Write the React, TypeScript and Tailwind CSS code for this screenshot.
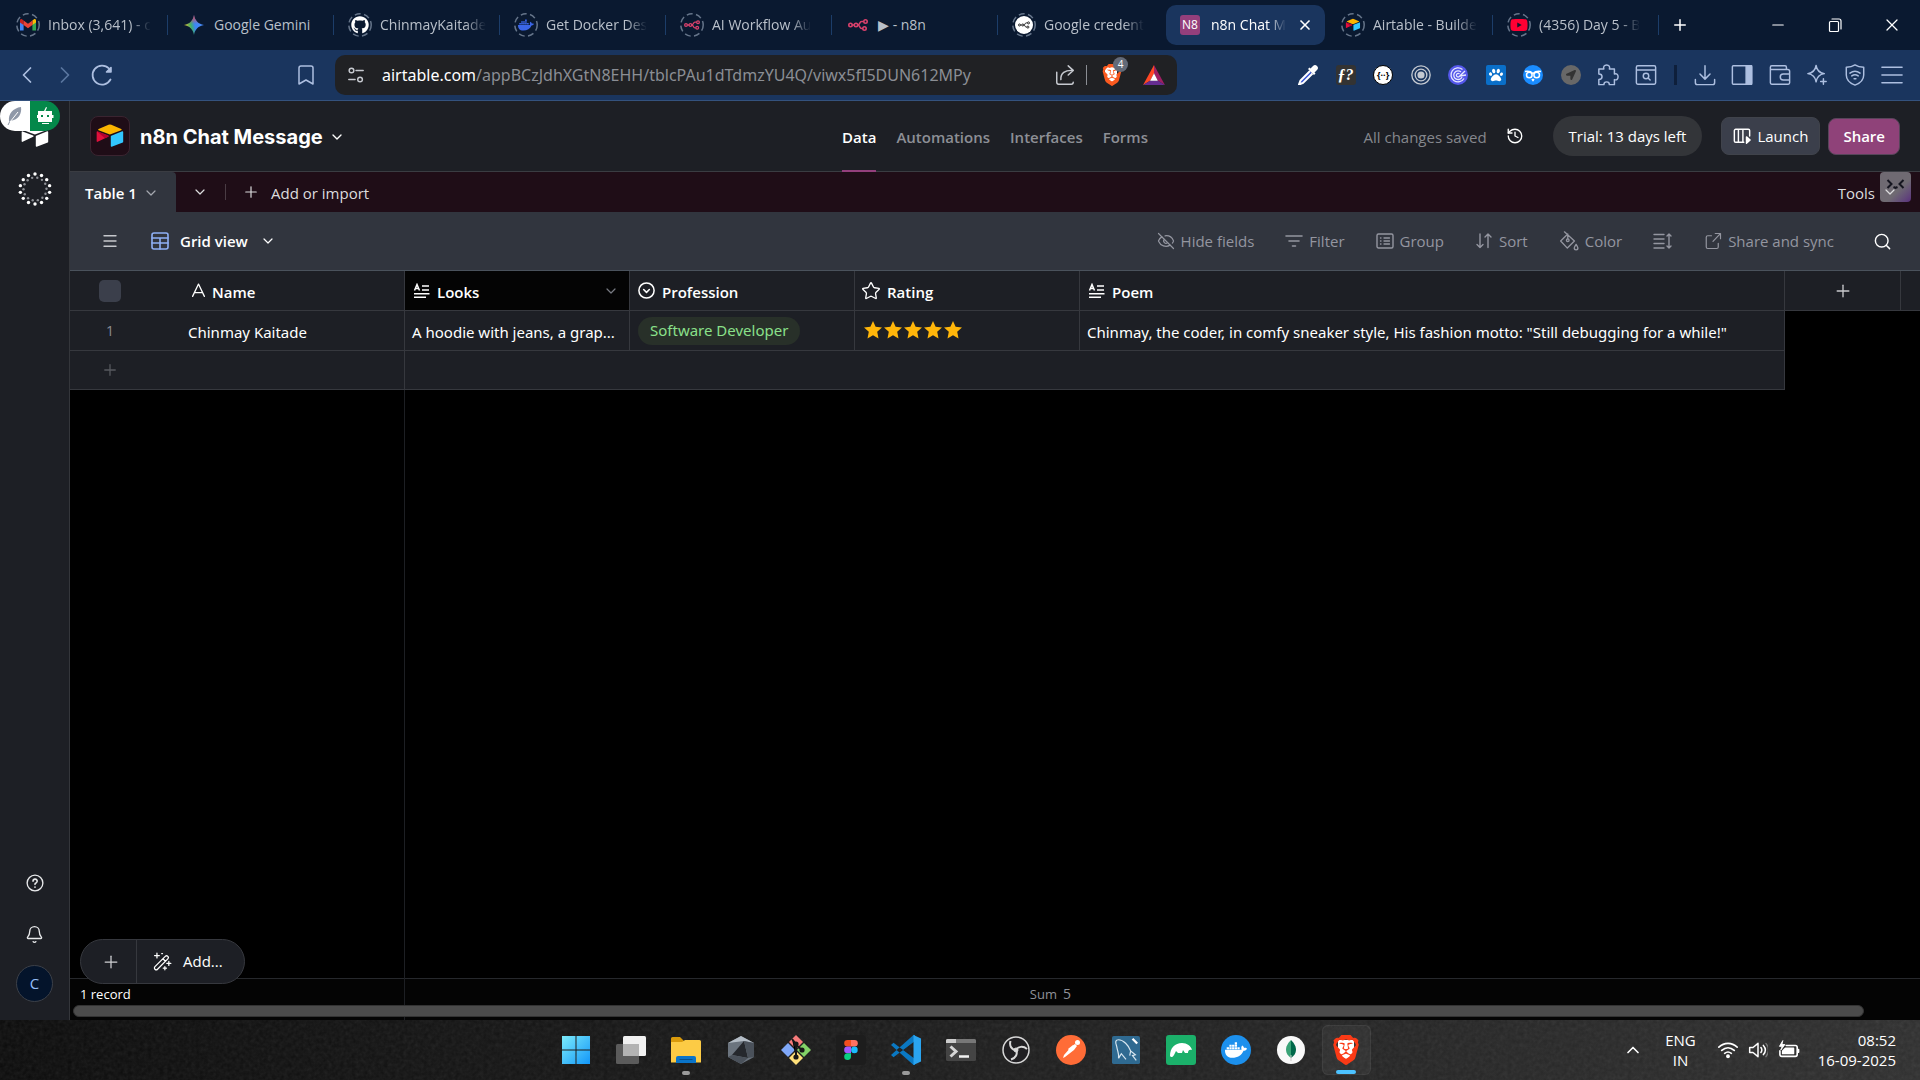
import React from "react";
import {
  Bell, Bookmark, ChevronDown, ChevronLeft, ChevronRight, ChevronUp, EyeOff, History, Menu,
  Minus, Plus, Search, Star, X,
} from "lucide-react";
import { FaDocker, FaGithub, FaYoutube, FaPaw, FaLocationArrow } from "react-icons/fa";
import { SiBrave } from "react-icons/si";

type Kids = { children?: React.ReactNode; className?: string };

function Svg({ children, className = "size-5", box = "0 0 24 24" }: Kids & { box?: string }) {
  return (
    <svg viewBox={box} className={className} fill="none" stroke="currentColor" strokeWidth="1.6" strokeLinecap="round" strokeLinejoin="round" aria-hidden="true">
      {children}
    </svg>
  );
}

function AirtableLogo({ className, mono = false }: { className?: string; mono?: boolean }) {
  return (
    <svg viewBox="0 0 200 170" className={className} aria-hidden="true">
      <path fill={mono ? "#fff" : "#fcb400"} d="M90.039 12.368 24.079 39.66c-3.667 1.519-3.63 6.729.062 8.192l66.235 26.266a24.58 24.58 0 0 0 18.12 0l66.236-26.266c3.69-1.463 3.729-6.673.06-8.191l-65.958-27.293a24.58 24.58 0 0 0-18.795 0" />
      <path fill={mono ? "#fff" : "#32c6ff"} d="M105.312 88.46v65.617c0 3.12 3.147 5.258 6.048 4.108l73.806-28.648a4.42 4.42 0 0 0 2.79-4.108V59.813c0-3.121-3.147-5.258-6.048-4.108l-73.806 28.648a4.42 4.42 0 0 0-2.79 4.108" />
      <path fill={mono ? "#fff" : "#e0103c"} d="M88.078 91.846 17.712 125.652c-2.93 1.414-6.672-.722-6.672-3.978V60.088c0-3 3.5-5.3 6.554-4.11L87.71 83.76c3.564 1.414 3.844 6.408.368 8.086" />
      {!mono && <path fill="#b3002f" d="m88.078 91.846-21.904 10.576L14 57.3c1-1 2.6-1.6 4-1.2L87.71 83.76c3.564 1.414 3.844 6.408.368 8.086" />}
    </svg>
  );
}

function N8nMark({ className, color = "#d9416c" }: { className?: string; color?: string }) {
  return (
    <svg viewBox="0 0 40 24" className={className} fill="none" stroke={color} strokeWidth="3.2" aria-hidden="true">
      <circle cx="5" cy="12" r="3.4" />
      <circle cx="16" cy="12" r="3.4" />
      <circle cx="35" cy="5" r="3.4" />
      <circle cx="33" cy="19" r="3.4" />
      <path d="M8.4 12h4.2M19.4 12c5 0 3-7 8-7h4M19.4 12c5 0 3 7 8 7h2" />
    </svg>
  );
}

function Ring({ children }: Kids) {
  return (
    <span className="relative grid size-6 place-items-center">
      <svg viewBox="0 0 24 24" className="absolute inset-0 size-6" fill="none" stroke="#66758a" strokeWidth="1.5" strokeDasharray="6 3.42" aria-hidden="true">
        <circle cx="12" cy="12" r="11.2" />
      </svg>
      {children}
    </span>
  );
}

const gmail = (
  <svg viewBox="0 0 16 12" className="h-3 w-4" aria-hidden="true">
    <path fill="#4285f4" d="M0 2v9.500h3.600V5z" />
    <path fill="#34a853" d="M16 2v9.500h-3.600V5z" />
    <path fill="#fbbc04" d="M12.400 1.500 14 .3c.8-.5 2 0 2 1.300v1.800L12.400 6z" />
    <path fill="#c5221f" d="M3.600 1.500 2 .3C1.200-.2 0 .3 0 1.600v1.800L3.600 6z" />
    <path fill="#ea4335" d="M3.600 1.500 8 4.800l4.400-3.300V6L8 9.300 3.600 6z" />
  </svg>
);

const gemini = (
  <svg viewBox="0 0 20 20" className="size-5" aria-hidden="true">
    <defs>
      <linearGradient id="gem" x1="0" y1="0.6" x2="1" y2="0.4">
        <stop offset="0" stopColor="#f6c026" />
        <stop offset="0.35" stopColor="#3fae6a" />
        <stop offset="0.55" stopColor="#3b86f5" />
        <stop offset="1" stopColor="#4b8cf8" />
      </linearGradient>
      <linearGradient id="gem2" x1="0.5" y1="0" x2="0.5" y2="1">
        <stop offset="0" stopColor="#f04438" />
        <stop offset="0.45" stopColor="#f04438" stopOpacity="0" />
      </linearGradient>
    </defs>
    <path fill="url(#gem)" d="M10 0c.8 5.500 4.500 9.200 10 10-5.500.8-9.200 4.500-10 10C9.200 14.500 5.500 10.800 0 10 5.500 9.200 9.200 5.500 10 0" />
    <path fill="url(#gem2)" d="M10 0c.8 5.500 4.500 9.200 10 10-5.500.8-9.200 4.500-10 10C9.200 14.500 5.500 10.800 0 10 5.500 9.200 9.200 5.500 10 0" />
  </svg>
);

const tabs = [
  { title: "Inbox (3,641) - c", fade: true, icon: <Ring>{gmail}</Ring> },
  { title: "Google Gemini", icon: gemini },
  { title: "ChinmayKaitade", fade: true, icon: <Ring><FaGithub className="size-[18px] text-white" /></Ring> },
  { title: "Get Docker Des", fade: true, icon: <Ring><FaDocker className="size-4 text-[#3b66e8]" /></Ring> },
  { title: "AI Workflow Au", fade: true, icon: <Ring><N8nMark className="h-3 w-4" /></Ring> },
  { title: "▶ - n8n", icon: <N8nMark className="h-4 w-5" /> },
  { title: "Google credent", fade: true, last: true, icon: <Ring><span className="grid size-[18px] place-items-center rounded-full bg-white"><N8nMark className="h-2 w-3" color="#222" /></span></Ring> },
  { title: "n8n Chat M", active: true, icon: <span className="grid size-5 place-items-center rounded-[3px] bg-[#943f7c] text-xs text-white">N8</span> },
  { title: "Airtable - Builde", fade: true, icon: <Ring><AirtableLogo className="w-4" /></Ring> },
  { title: "(4356) Day 5 - B", fade: true, icon: <Ring><FaYoutube className="size-[18px] text-[#ff0033]" /></Ring> },
];

function TabStrip() {
  return (
    <div className="flex h-[50px] shrink-0 items-center bg-[#0a1930] pl-[2px] text-sm text-[#b9c0ca]">
      {tabs.map((t) =>
        t.active ? (
          <div key={t.title} className="mx-[2px] flex h-10 w-[159px] items-center rounded-[10px] bg-[#1a355e] pl-3 text-white">
            <span className="grid w-6 place-items-center">{t.icon}</span>
            <span className="ml-[9px] whitespace-nowrap [mask-image:linear-gradient(to_right,black_75%,transparent)]">{t.title}</span>
            <button aria-label="Close tab" className="ml-auto pr-3"><X className="size-4" strokeWidth={2.5} /></button>
          </div>
        ) : (
          <div key={t.title} className="flex h-10 w-[166px] items-center pl-3">
            <span className="grid w-7 place-items-center">{t.icon}</span>
            <span className={t.fade ? "ml-[6px] whitespace-nowrap [mask-image:linear-gradient(to_right,black_80%,transparent)]" : "ml-[6px] whitespace-nowrap"}>{t.title}</span>
            <span className={t.last ? "ml-auto h-5 w-px" : "ml-auto h-5 w-px bg-[#1c3d69]"} />
          </div>
        )
      )}
      <button aria-label="New tab" className="ml-3 text-white"><Plus className="size-[18px]" strokeWidth={2} /></button>
      <div className="ml-auto flex text-white">
        <button aria-label="Minimize" className="grid w-[57px] place-items-center"><Minus className="size-[18px]" strokeWidth={1.5} /></button>
        <button aria-label="Restore" className="grid w-[57px] place-items-center">
          <Svg className="size-4" box="0 0 16 16"><path d="M3.500 4.500h7a1 1 0 0 1 1 1v8a1 1 0 0 1-1 1h-7a1 1 0 0 1-1-1v-8a1 1 0 0 1 1-1M5 2h7a2 2 0 0 1 2 2v8" strokeWidth="1.2" /></Svg>
        </button>
        <button aria-label="Close" className="grid w-[57px] place-items-center"><X className="size-5" strokeWidth={1.5} /></button>
      </div>
    </div>
  );
}

const extensions: [string, React.ReactNode][] = [
  ["Color picker", <svg key="a" viewBox="0 0 20 20" className="size-5"><path d="m12 6-9.500 9.500-1.500 4 4-1.500L14.500 8.500" fill="#3a56d4" stroke="#fff" strokeWidth="2" /><path d="m10 4 6 6 1.500-1.500-1-1L19 5a2.500 2.500 0 0 0-4-4l-2.500 2.500-1-1z" fill="#fff" /></svg>],
  ["Font finder", <span key="b" className="grid size-5 place-items-center rounded-[3px] bg-[#333] font-['Liberation_Serif'] text-base leading-none font-bold text-white italic">ƒ?</span>],
  ["JSON viewer", <span key="c" className="grid size-5 place-items-center rounded-full border border-black bg-white text-[9px] font-bold text-black">{"{··}"}</span>],
  ["Target", <Svg key="d" className="size-5 text-[#c4c9d1]"><circle cx="12" cy="12" r="11" /><circle cx="12" cy="12" r="7" /><circle cx="12" cy="12" r="3.5" fill="currentColor" /></Svg>],
  ["Radar", <svg key="e" viewBox="0 0 20 20" className="size-5" fill="none" stroke="#e6e8ff" strokeWidth="1.3"><circle cx="10" cy="10" r="10" fill="#5457ea" stroke="none" /><path d="M14.500 4.500a7 7 0 1 0 1.500 9M13 7a4.300 4.300 0 1 0 1 5M11.500 9a1.800 1.800 0 1 0 .3 2L17 6M12 11l6-1" /></svg>],
  ["Paw", <span key="f" className="grid size-5 place-items-center rounded-[2px] bg-[#0a6fc9]"><FaPaw className="size-[14px] text-white" /></span>],
  ["Owl", <svg key="g" viewBox="0 0 20 20" className="size-5" fill="none" stroke="#fff" strokeWidth="1.5"><circle cx="10" cy="10" r="10" fill="#1a8cff" stroke="none" /><circle cx="6.3" cy="10" r="2.8" /><circle cx="13.7" cy="10" r="2.8" /><path d="M2 6.500c3-.5 6 0 8 2 2-2 5-2.500 8-2M9 14l1 1.500 1-1.500" /></svg>],
  ["Location", <span key="h" className="grid size-5 place-items-center rounded-full bg-[#686868]"><FaLocationArrow className="size-[10px] text-[#333]" /></span>],
  ["Extensions", <Svg key="i" className="size-[22px]"><path d="M2 5.500h5.500c-1-2.500.500-4.500 3-4.500s4 2 3 4.500H19V11c2.500-1 4 .5 4 3s-1.500 4-4 3v5.500h-5.500c0-2-1-3-3-3s-3 1-3 3H2V17c2 0 3.500-1 3.500-3S4 11 2 11z" /></Svg>],
  ["Find on page", <Svg key="j" className="size-[22px]"><rect x="1.5" y="2" width="21" height="20" rx="1.5" /><path d="M2 6.500h20" /><circle cx="12" cy="13" r="3" /><path d="m14.500 15.500 2 2" /></Svg>],
];

const browserTools: [string, React.ReactNode][] = [
  ["Downloads", <Svg key="a" className="size-[22px]"><path d="M12 2v14M6.500 11l5.500 5.500L17.500 11M1.500 17v3.500a2 2 0 0 0 2 2h17a2 2 0 0 0 2-2V17" /></Svg>],
  ["Sidebar", <Svg key="b" className="size-[22px]"><rect x="1.5" y="2" width="21" height="20" rx="1" /><path d="M16.500 2h6v20h-6z" fill="currentColor" /></Svg>],
  ["Wallet", <Svg key="c" className="size-[22px]"><path d="M19 6V3.500a1.500 1.500 0 0 0-1.500-1.500H3a1.500 1.500 0 0 0-1.500 1.500v17A1.500 1.500 0 0 0 3 22h18a1.500 1.500 0 0 0 1.500-1.500V8A2 2 0 0 0 20.500 6H2M22 11h-6.500a3.200 3.200 0 0 0 0 6.400H22" /></Svg>],
  ["Leo", <Svg key="d" className="size-[22px]"><path d="M11 1.500c.8 5.500 3.500 8.200 9 9-5.500.8-8.200 3.500-9 9-.8-5.500-3.500-8.200-9-9 5.500-.8 8.200-3.500 9-9M19 16v6M16 19h6" /></Svg>],
  ["VPN", <Svg key="e" className="size-[22px]"><path d="M12 1c3 2 6 2.500 9.500 2.500V12c0 5-4 9-9.500 11C6.500 21 2.500 17 2.500 12V3.500C6 3.500 9 3 12 1M6.500 10c3.500-2.800 7.500-2.800 11 0M8.500 13c2.500-1.800 4.500-1.800 7 0M11 16h2" /></Svg>],
  ["Menu", <Svg key="f" className="size-[22px]"><path d="M1 3.500h22M1 12h22M1 20.500h22" /></Svg>],
];

function BrowserBar() {
  return (
    <div className="flex h-[51px] shrink-0 items-center border-b border-[#34527e] bg-[#1a355e] text-[#adbfe0]">
      <div className="flex w-[335px] shrink-0 items-center pl-[13px]">
        <button aria-label="Back"><ChevronLeft className="size-7" strokeWidth={1.5} /></button>
        <button aria-label="Forward" className="ml-[10px] text-[#5a769f]"><ChevronRight className="size-7" strokeWidth={1.5} /></button>
        <button aria-label="Reload" className="ml-[11px]">
          <Svg className="size-6"><path d="M20.500 16.500A9.500 9.500 0 1 1 19 5.500" strokeWidth="1.8" /><path d="M16.500 9H21V4.500z" fill="currentColor" /></Svg>
        </button>
        <button aria-label="Bookmark" className="mr-[17px] ml-auto"><Bookmark className="size-6" strokeWidth={1.5} /></button>
      </div>
      <div className="flex h-10 max-w-[842px] min-w-0 flex-1 items-center rounded-[10px] bg-[#202124] px-3 text-[#c7cad0]">
        <Svg className="size-[18px] shrink-0" box="0 0 20 20"><circle cx="5" cy="5" r="2.6" /><path d="M10 5h8M2 15h7" /><circle cx="14.5" cy="15" r="2.6" /></Svg>
        <p className="ml-[17px] min-w-0 flex-1 truncate font-['Noto_Sans'] text-base text-[#8b8e94]"><span className="text-white">airtable.com</span>/appBCzJdhXGtN8EHH/tblcPAu1dTdmzYU4Q/viwx5fI5DUN612MPy</p>
        <button aria-label="Share page"><Svg className="size-[22px]"><path d="M3 9v11a2 2 0 0 0 2 2h14a2 2 0 0 0 2-2M7.500 17C7 10 12 6.500 20.500 7M15.500 2l5.500 5-5.500 5" /></Svg></button>
        <span className="mx-[10px] h-5 w-px bg-[#8b8e94]" />
        <button aria-label="Brave Shields" className="relative ml-1">
          <span className="relative grid h-6 w-5 place-items-center"><span className="absolute h-4 w-3 rounded-b-md bg-white" /><SiBrave className="relative size-[22px] text-[#fb5a1f]" /></span>
          <span className="absolute -top-[6px] left-3 grid size-[15px] place-items-center rounded-full bg-[#636a78] text-[10px] text-white">4</span>
        </button>
        <button aria-label="Brave Rewards" className="ml-[22px]">
          <svg viewBox="0 0 24 22" className="w-[22px]"><path fill="#ff4724" d="M12 0 0 22l8-5 4-8z" /><path fill="#9e1f63" d="m12 0 12 22-8-5-4-8z" /><path fill="#662d91" d="M0 22h24l-8-5H8z" /><path fill="#fff" d="m12 9 4.200 8.200H7.800z" /></svg>
        </button>
      </div>
      <div className="mr-[18px] ml-auto flex items-center pl-4">
        <div className="flex w-[358px] items-center justify-between">
          {extensions.map(([l, i]) => <button key={l} aria-label={l} className="flex w-5 justify-center"><span className="shrink-0">{i}</span></button>)}
        </div>
        <span className="mx-[18px] h-5 w-[3px] bg-[#0e1f3b]" />
        <div className="flex w-[207px] items-center justify-between">
          {browserTools.map(([l, i]) => <button key={l} aria-label={l} className="flex w-5 justify-center"><span className="shrink-0">{i}</span></button>)}
        </div>
      </div>
    </div>
  );
}

function Rail() {
  const dots = Array.from({ length: 14 }, (_, i) => (i / 14) * Math.PI * 2 - Math.PI / 2);
  return (
    <aside className="relative flex w-[70px] shrink-0 flex-col items-center border-r border-[#34363b] bg-[#1d1f25] pt-[22px] text-[#e8e9eb]">
      <div className="absolute top-0 left-0 flex h-[30px] w-[60px] overflow-hidden rounded-full">
        <button aria-label="Writer" className="grid flex-1 place-items-center bg-white">
          <svg viewBox="0 0 20 20" className="size-[20px]"><path d="m3 19 5-10" stroke="#8f98a8" /><path d="M4 15C3 8 8 2 16 1c1 6-2 13-11 14" fill="#8f98a8" /><path d="M5 16 13 6" stroke="#fff" /></svg>
        </button>
        <button aria-label="Assistant" className="grid flex-1 place-items-center bg-[#04884a]">
          <svg viewBox="0 0 20 20" className="size-[20px]" fill="#fff"><path d="m9 5 2-4 1 .6L10.500 5H17v11h-3v2H7v-2H3V5zM2 9v3h1V9zM17 9v3h1.500V9z" /><path fill="#04884a" d="M6 9h2v2H6zM12 9h2v2h-2zM7 16h7v1H7z" /></svg>
        </button>
      </div>
      <AirtableLogo mono className="w-[30px]" />
      <svg viewBox="0 0 36 36" className="mt-[22px] size-9" aria-hidden="true">
        {dots.map((a) => (
          <g key={a}>
            <circle cx={18 + 15 * Math.cos(a)} cy={18 + 15 * Math.sin(a)} r="1.7" fill="#fff" />
            <circle cx={18 + 11.5 * Math.cos(a + 0.2)} cy={18 + 11.5 * Math.sin(a + 0.2)} r="1.2" fill="#8e9096" />
          </g>
        ))}
      </svg>
      <button aria-label="Help" className="mt-auto">
        <Svg className="size-[18px]"><circle cx="12" cy="12" r="10.5" strokeWidth="1.8" /><path d="M9.300 9.500a2.800 2.800 0 1 1 4 2.600c-.9.400-1.300.8-1.300 1.700M12 17.300v.2" strokeWidth="2.2" /></Svg>
      </button>
      <button aria-label="Notifications" className="mt-[33px]"><Bell className="size-[19px]" strokeWidth={1.7} /></button>
      <button aria-label="Account" className="mt-[21px] mb-[18px] grid size-[37px] place-items-center rounded-full border border-[#3c4048] bg-[#04142b] text-[15px] text-[#93bdf7]">C</button>
    </aside>
  );
}

function AppHeader() {
  return (
    <header className="grid h-[71px] shrink-0 grid-cols-[1fr_auto_1fr] items-center border-b border-[#3a3c42] bg-[#1d1f25] pr-5 pl-5">
      <div className="flex items-center">
        <span className="grid size-10 place-items-center rounded-lg border border-[#3a2430] bg-[#1f0d17]"><AirtableLogo className="w-[30px]" /></span>
        <button className="ml-[10px] flex items-center gap-[6px] pt-px font-['Inter'] text-xl font-bold text-white">n8n Chat Message<ChevronDown className="size-4" strokeWidth={2} /></button>
      </div>
      <nav className="flex h-full gap-5 text-[15px] font-semibold text-[#8d8f96]">
        <a href="#data" className="-mb-px flex items-center border-b-2 border-[#943f7c] pt-1 text-white">Data</a>
        <a href="#automations" className="flex items-center pt-[2px]">Automations</a>
        <a href="#interfaces" className="flex items-center pt-[2px]">Interfaces</a>
        <a href="#forms" className="flex items-center pt-[2px]">Forms</a>
      </nav>
      <div className="flex items-center justify-end text-[15px] text-white">
        <span className="pt-[2px] text-[#85878d]">All changes saved</span>
        <button aria-label="History" className="ml-[19px]"><History className="size-[18px]" strokeWidth={1.8} /></button>
        <button className="ml-[29px] h-10 rounded-full bg-[#333539] px-4">Trial: 13 days left</button>
        <button className="ml-[19px] flex h-[38px] items-center gap-[6px] rounded-lg border border-[#40434b] bg-[#3b3f4b] px-[11px]">
          <Svg className="size-[18px]" box="0 0 20 20"><path d="M12 17H3a1.500 1.500 0 0 1-1.500-1.500V4A1.500 1.500 0 0 1 3 2.500h14A1.500 1.500 0 0 1 18.500 4v6M6 3v13.500M11 3v13.500" /><path d="m15 11 4 3.500-4 3.500z" fill="currentColor" /></Svg>
          Launch
        </button>
        <button className="ml-2 h-[37px] rounded-lg border border-[#57455a] bg-[#8f4279] px-[14px] font-semibold">Share</button>
      </div>
    </header>
  );
}

function TableTabs() {
  return (
    <div className="flex h-10 shrink-0 items-center bg-[#1f0d17] text-[15px] text-[#dcdcde]">
      <button className="flex h-full w-[106px] items-center gap-[6px] rounded-tr bg-[#31353e] pt-[2px] pl-[15px] font-semibold text-white">Table 1<ChevronDown className="size-4 text-[#a5a8af]" strokeWidth={1.8} /></button>
      <button aria-label="All tables" className="ml-4"><ChevronDown className="size-4" strokeWidth={1.8} /></button>
      <span className="ml-[17px] h-4 w-px bg-[#4a3c44]" />
      <button className="ml-4 flex items-center gap-[11px]"><Plus className="size-[18px]" strokeWidth={1.6} /><span className="pt-[2px]">Add or import</span></button>
      <button className="relative mr-[22px] ml-auto flex items-center gap-[7px]">
        <span className="pt-[2px]">Tools</span>
        <ChevronDown className="relative z-10 size-4" strokeWidth={1.8} />
        <span className="absolute -top-2 -right-[13px] h-[30px] w-[31px] rounded bg-linear-to-br from-[#6f6a72] from-60% to-[#5a2f7c]">
          <svg viewBox="0 0 30 30" className="size-full" fill="none" stroke="#15151f" strokeWidth="2"><path d="m7 8 4 4-4 4M23 8l-4 4 4 4M13 15l2 1 2-1" /></svg>
        </span>
      </button>
    </div>
  );
}

function ToolBtn({ icon, label }: { icon: React.ReactNode; label: string }) {
  return <button className="flex items-center gap-[6px]">{icon}{label}</button>;
}

function ViewBar() {
  return (
    <div className="flex h-[59px] shrink-0 items-center border-b border-[#4a525c] bg-[#31353e] text-[15px] text-[#9496a0]">
      <button aria-label="Views" className="ml-[31px] text-[#c6c8cc]"><Menu className="size-[18px]" strokeWidth={1.8} /></button>
      <button className="ml-8 flex items-center font-semibold text-white">
        <Svg className="size-[18px] text-[#8fb0f5]" box="0 0 18 18"><rect x="1" y="1" width="16" height="16" rx="2" /><path d="M1 6h16M1 11h16M9 6v11" /></Svg>
        <span className="ml-[11px]">Grid view</span>
        <ChevronDown className="ml-3 size-4" strokeWidth={1.8} />
      </button>
      <div className="mr-7 ml-auto flex items-center">
        <ToolBtn label="Hide fields" icon={<EyeOff className="size-[18px]" strokeWidth={1.6} />} />
        <span className="w-[31px]" />
        <ToolBtn label="Filter" icon={<Svg className="size-[18px]" box="0 0 18 18"><path d="M1 4h16M4 9h10M7.500 14h3" /></Svg>} />
        <span className="w-[31px]" />
        <ToolBtn label="Group" icon={<Svg className="size-[18px]" box="0 0 18 18"><rect x="1" y="2" width="16" height="14" rx="1.5" strokeWidth="1.4" /><path d="M4.500 6h.5M4.500 9h.5M4.500 12h.5M8 6h5.500M8 9h5.500M8 12h5.500" strokeWidth="1.3" /></Svg>} />
        <span className="w-[31px]" />
        <ToolBtn label="Sort" icon={<Svg className="size-[18px]" box="0 0 18 18"><path d="M5 2v13.500M2 12.500l3 3 3-3M13 15.500V2M10 5l3-3 3 3" strokeWidth="1.4" /></Svg>} />
        <span className="w-[31px]" />
        <ToolBtn label="Color" icon={<Svg className="size-5"><path d="M9 5 2 12l8 8.500 8.500-8.500L6.500 1M10.500 3.500v6" /><circle cx="10.5" cy="11" r="1.6" /><path d="M20.500 16c-1.500 2.300-2.200 3.400-2.200 4.400a2.200 2.200 0 0 0 4.400 0c0-1-.7-2.100-2.200-4.400" /></Svg>} />
        <button aria-label="Row height" className="ml-[31px]"><Svg className="size-5" box="0 0 20 20"><path d="M1 3.500h10M1 8h10M1 12.500h10M1 17h10M16 3v14M14 5l2-2 2 2M14 15l2 2 2-2" strokeWidth="1.4" /></Svg></button>
        <span className="w-[31px]" />
        <ToolBtn label="Share and sync" icon={<Svg className="size-[18px]"><path d="M10 5H5a2 2 0 0 0-2 2v13a2 2 0 0 0 2 2h12a2 2 0 0 0 2-2v-5M12 12.500 21.500 2.500M15 2h7v7" /></Svg>} />
        <button aria-label="Search" className="ml-[39px] text-white"><Search className="size-[19px]" strokeWidth={1.8} /></button>
      </div>
    </div>
  );
}

const textField = (
  <svg viewBox="0 0 18 16" className="h-4 w-[18px]" fill="none" stroke="currentColor" strokeWidth="1.5" aria-hidden="true">
    <path d="M1.500 7.500 4 1.500l2.500 6M2.500 5.500h3M9 3h7M9 7h7M1 10.700h15.500M1 14.200h12" />
  </svg>
);

function Grid() {
  const line = "border-[#36383e]";
  return (
    <table className="relative z-10 w-full table-fixed border-separate border-spacing-0 text-left text-[15px] text-white">
      <colgroup>
        <col className="w-[335px]" /><col className="w-[225px]" /><col className="w-[225px]" /><col className="w-[225px]" /><col className="w-[705px]" /><col className="w-[116px]" /><col />
      </colgroup>
      <thead>
        <tr className="h-10 bg-[#1d1f25] *:border-[#36383e] *:border-b *:p-0 *:font-semibold">
          <th className="border-r">
            <div className="flex items-center">
              <input type="checkbox" aria-label="Select all" className="ml-[29px] size-[22px] appearance-none rounded-[5px] bg-[#3b3f4b]" />
              <Svg className="ml-[70px] size-[15px]" box="0 0 14 14"><path d="M1.500 12.500 7 1l5.500 11.500M3.500 9h7" strokeWidth="1.2" /></Svg>
              <span className="ml-[6px] pt-[3px]">Name</span>
            </div>
          </th>
          <th className="border-r bg-[#040404]">
            <div className="flex items-center gap-[6px] pr-[10px] pl-2">{textField}<span className="pt-[3px]">Looks</span><ChevronDown className="ml-auto size-4 text-[#777a82]" strokeWidth={1.8} /></div>
          </th>
          <th className="border-r">
            <div className="flex items-center gap-[6px] pl-[7px]"><Svg className="size-[19px]" box="0 0 20 20"><circle cx="10" cy="10" r="8" /><path d="m7 9 3 3 3-3" /></Svg><span className="pt-[3px]">Profession</span></div>
          </th>
          <th className="border-r">
            <div className="flex items-center gap-[6px] pl-[6px]"><Star className="size-5" strokeWidth={1.6} /><span className="pt-[3px]">Rating</span></div>
          </th>
          <th className="border-r">
            <div className="flex items-center gap-[6px] pl-2">{textField}<span className="pt-[3px]">Poem</span></div>
          </th>
          <th className="border-r"><button aria-label="Add field" className="grid w-full place-items-center"><Plus className="size-5 text-[#c9cacd]" strokeWidth={1.6} /></button></th>
          <th />
        </tr>
      </thead>
      <tbody>
        <tr className="h-10 *:border-[#36383e] *:p-0 [&>td:nth-child(-n+5)]:border-r [&>td:nth-child(-n+5)]:border-b [&>td:nth-child(-n+5)]:bg-[#1d1f25]">
          <td><div className="flex items-center"><span className="w-[80px] text-center text-sm text-[#8a8d95]">1</span><span className="ml-[38px] pt-[3px] font-['Noto_Sans']">Chinmay Kaitade</span></div></td>
          <td><div className="px-[7px] pt-[3px] font-['Noto_Sans'] whitespace-nowrap">A hoodie with jeans, a grap...</div></td>
          <td><span className="ml-2 inline-flex h-7 items-center rounded-full bg-[#283029] px-3 font-['Noto_Sans'] text-[#8ae08a]">Software Developer</span></td>
          <td>
            <div className="flex pb-px pl-2">
              {[1, 2, 3, 4, 5].map((n) => (
                <svg key={n} viewBox="0 0 20 20" className="size-5" fill="#ffb60a" aria-hidden="true"><path d="M10 1 12.600 6.800 19 7.500 14.200 11.800 15.500 18.500 10 15.200 4.500 18.500 5.800 11.800 1 7.500 7.400 6.800z" /></svg>
              ))}
            </div>
          </td>
          <td><div className="truncate px-[7px] pt-[3px] font-['Noto_Sans']">Chinmay, the coder, in comfy sneaker style, His fashion motto: "Still debugging for a while!"</div></td>
          <td /><td />
        </tr>
        <tr className="h-[39px]">
          <td className={"border-r border-b bg-[#1d1f25] p-0 " + line}><button aria-label="Add record" className="ml-[31px] block text-[#57595f]"><Plus className="size-[18px]" strokeWidth={1.7} /></button></td>
          <td colSpan={4} className={"border-r border-b bg-[#1d1f25] p-0 " + line} />
          <td /><td />
        </tr>
      </tbody>
    </table>
  );
}

function GridPane() {
  return (
    <div className="relative flex min-h-0 flex-1 flex-col bg-black">
      <div className="absolute inset-y-0 left-0 w-[335px] border-r border-[#1d1f23]" />
      <Grid />
      <div className="absolute bottom-9 left-[10px] z-20 flex h-[45px] items-center rounded-full border border-[#36383e] bg-[#1d1f25] text-[15px] text-white">
        <button aria-label="Add record" className="grid h-full w-14 place-items-center border-r border-[#36383e] pl-1"><Plus className="size-5 text-[#d0d1d4]" strokeWidth={1.5} /></button>
        <button className="flex items-center gap-[11px] pr-[21px] pl-4">
          <Svg className="size-[19px]"><path d="m2.500 18.500 13-13a2.200 2.200 0 0 1 3.200 3.200l-13 13a2.200 2.200 0 0 1-3.200-3.200M12.500 8.500l3.200 3.200M5 1.500v6M2 4.500h6M11 2h1M20 12v5M17.500 14.500h5M15 18.500v4M13 20.500h4" /></Svg>
          Add...
        </button>
      </div>
      <footer className="mt-auto flex h-[42px] border-t border-[#26282c] bg-[#050505]/80 pt-[5px] text-[13px] leading-5">
        <span className="w-[335px] shrink-0 pl-[10px] text-white">1 record</span>
        <span className="w-[666px] text-right text-[#8f9198]">Sum<span className="ml-[6px] text-sm">5</span></span>
      </footer>
      <div className="absolute right-14 bottom-[3px] left-[3px] h-3 rounded-full border border-[#333] bg-[#4b4b4b]" />
    </div>
  );
}

const apps: { name: string; mark?: "dot" | "active"; icon: React.ReactNode }[] = [
  { name: "Start", icon: <svg viewBox="0 0 30 30" className="size-[30px]"><defs><linearGradient id="win" x1="0" y1="0" x2="1" y2="1"><stop stopColor="#7cecfb" /><stop offset="1" stopColor="#1296f8" /></linearGradient></defs><path fill="url(#win)" d="M1 1h13.500v13.500H1zM15.500 1H29v13.500H15.500zM1 15.500h13.500V29H1zM15.500 15.500H29V29H15.500z" /></svg> },
  { name: "Task view", icon: <svg viewBox="0 0 30 30" className="size-[30px]"><rect x="7" y="1" width="23" height="20" rx="1.5" fill="#f1f1f1" /><rect x="0" y="9" width="23" height="20" rx="1.5" fill="#5b5b5b" /><path d="M7 9h16v12H7z" fill="#b3b3b3" /></svg> },
  { name: "File Explorer", mark: "dot", icon: <svg viewBox="0 0 30 30" className="size-[30px]"><path fill="#d99a0b" d="M0 3.500A1.500 1.500 0 0 1 1.500 2H9l4 4v4H0z" /><path fill="#fccb45" d="M0 7h11l3-2h14.500A1.500 1.500 0 0 1 30 6.500v21H0z" /><path fill="#0a74c9" d="M5 28v-5a2 2 0 0 1 2-2h16a2 2 0 0 1 2 2v5z" /><path stroke="#06508d" d="M8.500 24.500h13" /></svg> },
  { name: "Unity Hub", icon: <svg viewBox="0 0 30 30" className="size-[30px]"><path fill="#6b747e" d="m15 1 13 7v14l-13 7-13-7V8z" /><path fill="#b4bdc6" d="m15 1 13 7-10-2L2 8z" /><path fill="#25282d" d="M18 6 6 20l16 3z" /><path fill="#4a515a" d="m18 6 4 17 6-1V8zM2 22l4-2 16 3-7 6z" /></svg> },
  { name: "Git", icon: <svg viewBox="0 0 30 30" className="size-[30px]"><path fill="#f77b7b" d="m15 0 7 7-7 7-7-7z" /><path fill="#83d267" d="m23 8 7 7-7 7-7-7z" /><path fill="#ffe07a" d="m15 16 7 7-7 7-7-7z" /><path fill="#80a8f8" d="m7 8 7 7-7 7-7-7z" /><path d="M11 4l4 5v14M15 10l6 5" stroke="#171717" strokeWidth="2" /><circle cx="15" cy="9" r="2.6" fill="#171717" /><circle cx="21" cy="15" r="2.6" fill="#171717" /><circle cx="15" cy="22" r="2.6" fill="#171717" /></svg> },
  { name: "Figma", icon: <svg viewBox="0 0 30 30" className="size-[30px]"><rect width="30" height="30" rx="4" fill="#1d1d1d" /><path fill="#f24e1e" d="M15 5v6.600h-3.500a3.300 3.300 0 0 1 0-6.600z" /><path fill="#ff7262" d="M15 5h3.500a3.300 3.300 0 0 1 0 6.600H15z" /><path fill="#a259ff" d="M15 11.600v6.600h-3.500a3.300 3.300 0 0 1 0-6.600z" /><circle cx="18.4" cy="14.9" r="3.3" fill="#1abcfe" /><path fill="#0acf83" d="M15 18.200v3.400a3.400 3.400 0 1 1-3.500-3.400z" /></svg> },
  { name: "Visual Studio Code", mark: "dot", icon: <svg viewBox="0 0 30 30" className="size-[30px]"><path fill="#0a78c2" d="m0 20 2.500 2.200L24 6V0h-1.500zM0 10l2.500-2.200L24 24v6h-1.500z" /><path fill="#2aa4f0" d="m22.500 0 7.500 3.500v23L22.500 30z" /></svg> },
  { name: "Terminal", icon: <svg viewBox="0 0 30 30" className="size-[30px]"><rect y="4" width="30" height="22" rx="1.5" fill="#444" /><path fill="#777" d="M0 8V5.500A1.500 1.500 0 0 1 1.500 4h27A1.500 1.500 0 0 1 30 5.500V8z" /><path fill="#ccc" d="M0 8V5.500A1.500 1.500 0 0 1 1.500 4H10v4z" /><path d="m4.500 11.500 5.500 5-5.500 5" stroke="#d6d6d6" strokeWidth="3" fill="none" /><path d="M13 21.500h10" stroke="#f2f2f2" strokeWidth="2.5" /></svg> },
  { name: "OBS Studio", icon: <svg viewBox="0 0 30 30" className="size-[30px]" fill="none" stroke="#d8d8d8"><circle cx="15" cy="15" r="13" fill="#201f22" strokeWidth="1.5" /><path strokeWidth="2" d="M15 15C11 15 8 11 9.500 6M15 15c2-3.500 7-4.500 11-1M15 15c2 3.500 0 8-5 9.500" /><circle cx="15" cy="15" r="2" fill="#d8d8d8" /></svg> },
  { name: "Postman", icon: <svg viewBox="0 0 30 30" className="size-[30px]"><circle cx="15" cy="15" r="15" fill="#ff6c37" /><path fill="#fff" d="m7 23 1-3 8-9 3-2 2 2-3 4-9 7zM12 14l5-4 2 3-5 4z" /><circle cx="21.5" cy="7.5" r="2.5" fill="#fff" /></svg> },
  { name: "MySQL Workbench", icon: <svg viewBox="0 0 30 30" className="size-[28px]" fill="none"><rect width="30" height="30" rx="2" fill="#2f6a91" /><path stroke="#d7e6f0" strokeWidth="1.3" d="M7 24C8 20 6 17 5 11 3 6 4 4 7 4c5 0 11 6 13 12l5 4-3 1 4 5M7 24l3-5 5 6M20 16l-1 5" /><path stroke="#fff" strokeWidth="2.5" d="m22 3 5 5" /></svg> },
  { name: "Robo", icon: <svg viewBox="0 0 30 30" className="size-[30px]"><rect width="30" height="30" rx="3" fill="#1bb06a" /><path fill="#fff" d="M4 21c0-8 5-13 12-13 5 0 9 3 10 7-3-1-4 1-4 3h-3l-2-3-1 3h-4l-2-2-2 4c-1 2-3 3-4 1" /></svg> },
  { name: "Docker Desktop", icon: <span className="grid size-[30px] place-items-center rounded-full bg-[#1c90ed]"><FaDocker className="size-[22px] text-white" /></span> },
  { name: "MongoDB Compass", icon: <svg viewBox="0 0 30 30" className="size-[30px]"><circle cx="15" cy="15" r="14" fill="#f9f9f9" /><path fill="#00684a" d="M15 5c4 4 5 7 5 10s-2 6-5 8z" /><path fill="#3aa377" d="M15 5c-4 4-5 7-5 10s2 6 5 8z" /><path stroke="#c9c9c9" d="M15 20v6" /></svg> },
  { name: "Brave", mark: "active", icon: <span className="relative grid size-[30px] place-items-center"><span className="absolute h-5 w-4 rounded-b-lg bg-white" /><SiBrave className="relative size-[30px] text-[#fb3a16]" /></span> },
];

function Taskbar() {
  return (
    <div className="relative flex h-[60px] shrink-0 items-center bg-linear-to-r from-[#0b0b0b] via-[#202020] via-60% to-[#2f2f2f] text-white">
      <svg className="absolute inset-0 h-full w-full opacity-10" aria-hidden="true">
        <filter id="grain"><feTurbulence type="fractalNoise" baseFrequency="0.25" numOctaves="2" /><feColorMatrix type="saturate" values="0" /></filter>
        <rect width="100%" height="100%" filter="url(#grain)" />
      </svg>
      <div className="relative mx-auto flex pl-[2px]">
        {apps.map((a) => (
          <button key={a.name} aria-label={a.name} className={a.mark === "active" ? "relative mx-[3px] grid h-[50px] w-[49px] place-items-center rounded-md border border-white/5 bg-white/5" : "relative grid h-[50px] w-[55px] place-items-center"}>
            {a.icon}
            {a.mark === "dot" && <span className="absolute bottom-0 h-1 w-2 rounded-full bg-[#9a9a9a]" />}
            {a.mark === "active" && <span className="absolute bottom-0 h-1 w-5 rounded-full bg-[#4cc2ff]" />}
          </button>
        ))}
      </div>
      <div className="absolute right-6 flex items-center text-[15px] leading-5">
        <button aria-label="Hidden icons"><ChevronUp className="size-5" /></button>
        <span className="ml-[22px] text-center">ENG<br />IN</span>
        <span className="ml-[22px] flex items-center gap-[10px]">
          <Svg className="size-5"><path d="M1 8.500c6.500-6 15.500-6 22 0M4.500 12.500c4.500-4 10.500-4 15 0M8 16c2.500-2 5.500-2 8 0" strokeWidth="2" /><circle cx="12" cy="19.5" r="1.5" fill="currentColor" /></Svg>
          <Svg className="size-5"><path d="M2 9h4l6-5v16l-6-5H2zM15.500 9c1.500 2 1.500 4 0 6M18.500 6.500c3 3.500 3 7.500 0 11" strokeWidth="1.8" /><path d="M21.500 4c4 5 4 11 0 16" stroke="#777" /></Svg>
          <Svg className="h-5 w-[22px]" box="0 0 24 22"><path d="M9 6h10a2 2 0 0 1 2 2v8a2 2 0 0 1-2 2H4a2 2 0 0 1-2-2v-4M22.500 10.500v3" strokeWidth="1.8" /><path d="M8 9h9v6H5v-3z" fill="currentColor" /><path d="M5 1 1.500 7h3L3 11l4.500-6h-3z" fill="currentColor" strokeWidth="1" /></Svg>
        </span>
        <span className="ml-[18px] text-right">08:52<br />16-09-2025</span>
      </div>
    </div>
  );
}

export default function App() {
  return (
    <div className="flex h-screen flex-col overflow-hidden bg-black font-['Open_Sans','Noto_Sans',sans-serif]">
      <TabStrip />
      <BrowserBar />
      <div className="flex min-h-0 flex-1">
        <Rail />
        <main className="flex min-w-0 flex-1 flex-col">
          <AppHeader />
          <TableTabs />
          <ViewBar />
          <GridPane />
        </main>
      </div>
      <Taskbar />
    </div>
  );
}
